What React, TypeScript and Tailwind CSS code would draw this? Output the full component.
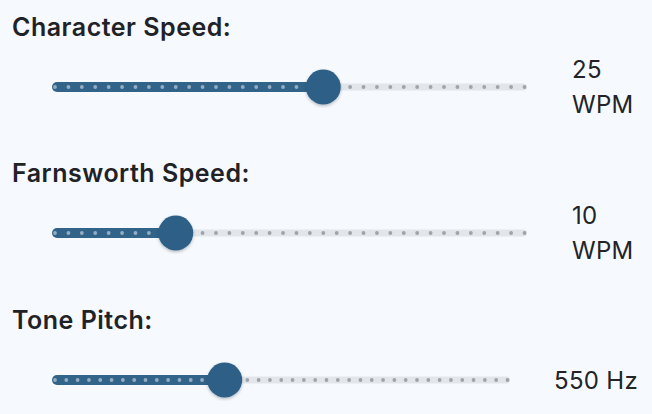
import React from 'react'

type SliderProps = {
  min: number
  max: number
  step: number
  value: number
  length: number
}

const PAD = 20

function TickSlider({ min, max, step, value, length }: SliderProps) {
  const steps = Math.round((max - min) / step)
  const dotStart = PAD + 3
  const dotEnd = PAD + length - 2.5
  const span = dotEnd - dotStart
  const thumbX = dotStart + ((value - min) / (max - min)) * span
  const cy = 21
  const dots = Array.from({ length: steps + 1 }, (_, i) => dotStart + (i / steps) * span)

  return (
    <svg width={length + PAD * 2} height={42} viewBox={`0 0 ${length + PAD * 2} 42`} className="shrink-0">
      <defs>
        <filter id="thumb-shadow" x="-40%" y="-40%" width="180%" height="180%">
          <feDropShadow dx="0" dy="1.5" stdDeviation="1.5" floodColor="#000" floodOpacity="0.25" />
        </filter>
      </defs>
      {/* inactive track */}
      <rect x={thumbX} y={cy - 3.5} width={PAD + length - thumbX} height={7} rx={3.5} fill="#e2e5e9" />
      {/* active track */}
      <rect x={PAD} y={cy - 5} width={thumbX - PAD} height={10} rx={5} fill="#32648a" />
      {dots.map((x, i) => (
        <circle key={i} cx={x} cy={cy} r={1.9} fill={x <= thumbX ? '#93aec3' : '#a0a4a9'} />
      ))}
      <circle cx={thumbX} cy={cy} r={17.5} fill="#2f6187" filter="url(#thumb-shadow)" />
    </svg>
  )
}

function Section({
  title,
  className = '',
  children,
}: {
  title: string
  className?: string
  children: React.ReactNode
}) {
  return (
    <section className={className}>
      <h2 className="pl-3 text-[25px] font-semibold leading-[30px] tracking-[0.5px] text-[#1f2226]">{title}</h2>
      {children}
    </section>
  )
}

export default function App() {
  return (
    <div
      className="h-[414px] w-[652px] overflow-hidden bg-[#f6f9fe] pt-[12px]"
      style={{ fontFamily: 'Inter, "Noto Sans", sans-serif' }}
    >
      <Section title="Character Speed:">
        <div className="flex h-[90px] items-center pl-[32px]">
          <TickSlider min={5} max={40} step={1} value={25} length={475} />
          <div className="ml-[25px] w-[70px] text-[24px] leading-[35px] tracking-[0.3px] text-[#222427]">
            25
            <br />
            WPM
          </div>
        </div>
      </Section>

      <Section title="Farnsworth Speed:" className="mt-[26px]">
        <div className="flex h-[90px] items-center pl-[32px]">
          <TickSlider min={1} max={36} step={1} value={10} length={475} />
          <div className="ml-[25px] w-[70px] text-[24px] leading-[35px] tracking-[0.3px] text-[#222427]">
            10
            <br />
            WPM
          </div>
        </div>
      </Section>

      <Section title="Tone Pitch:" className="mt-[27px]">
        <div className="flex h-[90px] items-center pl-[32px]">
          <TickSlider min={400} max={800} step={10} value={550} length={458} />
          <div className="ml-[24px] whitespace-nowrap text-[24px] leading-[35px] tracking-[0.3px] text-[#222427]">
            550 Hz
          </div>
        </div>
      </Section>
    </div>
  )
}
